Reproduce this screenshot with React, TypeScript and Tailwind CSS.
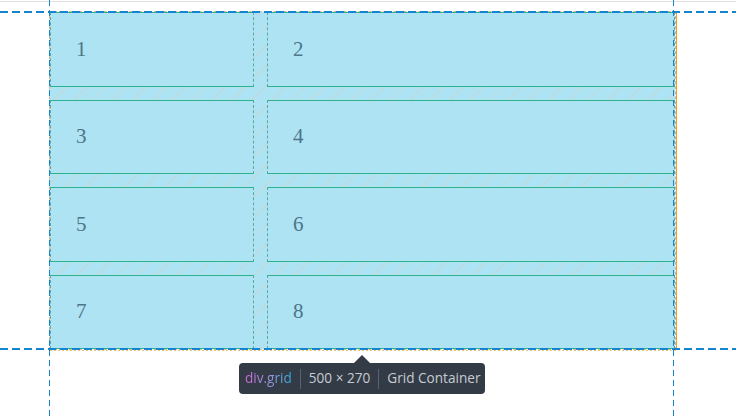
import React from 'react';

const cells = ['1', '2', '3', '4', '5', '6', '7', '8'];

// Dashed guide lines drawn by the grid inspector
const HDash = ({ top }: { top: string }) => (
  <div
    className={`absolute left-0 w-[736px] h-[2px] bg-[repeating-linear-gradient(90deg,#1784cf_0_8px,transparent_8px_12px)] ${top}`}
  />
);

const VDash = ({ left }: { left: string }) => (
  <div
    className={`absolute top-0 h-[416px] w-[1px] bg-[repeating-linear-gradient(180deg,#1784cf_0_6px,transparent_6px_10px)] ${left}`}
  />
);

const App: React.FC = () => {
  return (
    <div className="relative w-[751px] h-[416px] bg-white overflow-hidden">
      {/* top rule */}
      <div className="h-[1px] mt-[1px] w-[736px] bg-[#e3e3e3]" />

      {/* Grid container */}
      <div className="ml-[50px] mt-[10px] w-[625px] h-[337px] grid grid-cols-[1fr_2fr] grid-rows-4 gap-[13px] bg-[#ade3f3] bg-[repeating-linear-gradient(135deg,#ade3f3_0_8px,#b9dde2_8px_10px,#ade3f3_10px_14px)] [outline:1px_dashed_#c9b896]">
        {cells.map(n => (
          <div
            key={n}
            className="flex items-center pl-[25px] bg-[#ade3f3] border border-[#2cb38b] [border-left-style:dashed] [border-right-style:dashed] [border-left-color:#5aa99a] [border-right-color:#5aa99a] font-['Liberation_Serif',serif] text-[21px] text-[#4f7588]"
          >
            {n}
          </div>
        ))}
      </div>

      {/* right margin marker + bottom dotted edge */}
      <div className="absolute left-[676px] top-[12px] w-[1px] h-[338px] bg-[#f39c2c]" />
      <div className="absolute left-[50px] top-[350px] w-[627px] h-[1px] bg-[repeating-linear-gradient(90deg,#f3c27a_0_2px,transparent_2px_4px)]" />

      <HDash top="top-[11px]" />
      <HDash top="top-[348px]" />
      <VDash left="left-[49px]" />
      <VDash left="left-[673px]" />

      {/* Tooltip */}
      <div className="absolute left-[239px] top-[355px] flex flex-col items-start">
        <div className="ml-[115px] w-0 h-0 border-x-[8px] border-x-transparent border-b-[8px] border-b-[#333b47]" />
        <div className="flex items-center whitespace-nowrap h-[31px] w-[246px] px-[6px] rounded-[4px] bg-[#333b47] font-['Open_Sans',sans-serif] text-[13.6px] text-[#c6cbd1]">
          <span className="bg-gradient-to-r from-[#d266d6] to-[#13aee0] bg-clip-text text-transparent">div.grid</span>
          <span className="mx-[8px] w-[1px] h-[20px] shrink-0 bg-[#596270]" />
          <span>500 × 270</span>
          <span className="mx-[8px] w-[1px] h-[20px] shrink-0 bg-[#596270]" />
          <span>Grid Container</span>
        </div>
      </div>
    </div>
  );
};

export default App;
